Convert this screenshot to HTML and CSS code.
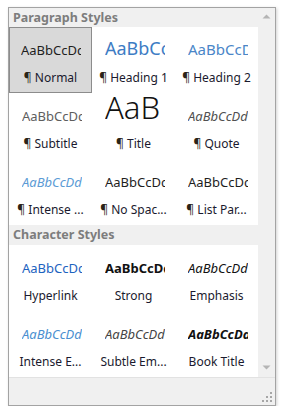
FILE: index.html
```html
<!DOCTYPE html>
<html lang="en">
<head>
  <meta charset="UTF-8" />
  <title>Styles Gallery</title>
  <link rel="stylesheet" href="styles.css">
</head>
<body>
  <div class="panel">
    <div class="list">
      <div class="group-title">Paragraph Styles</div>
      <div class="grid">
        <div class="cell selected">
          <div class="preview"><span class="p-normal">AaBbCcDd</span></div>
          <div class="label"><span class="pil">¶</span> Normal</div>
        </div>
        <div class="cell">
          <div class="preview"><span class="p-h1">AaBbCcDd</span></div>
          <div class="label"><span class="pil">¶</span> Heading 1</div>
        </div>
        <div class="cell">
          <div class="preview"><span class="p-h2">AaBbCcDd</span></div>
          <div class="label"><span class="pil">¶</span> Heading 2</div>
        </div>
        <div class="cell">
          <div class="preview"><span class="p-subtitle">AaBbCcDd</span></div>
          <div class="label"><span class="pil">¶</span> Subtitle</div>
        </div>
        <div class="cell">
          <div class="preview"><span class="p-title">AaB</span></div>
          <div class="label"><span class="pil">¶</span> Title</div>
        </div>
        <div class="cell">
          <div class="preview"><span class="p-quote">AaBbCcDd</span></div>
          <div class="label"><span class="pil">¶</span> Quote</div>
        </div>
        <div class="cell">
          <div class="preview"><span class="p-iquote">AaBbCcDd</span></div>
          <div class="label"><span class="pil">¶</span> Intense ...</div>
        </div>
        <div class="cell">
          <div class="preview"><span class="p-normal">AaBbCcDd</span></div>
          <div class="label"><span class="pil">¶</span> No Spac...</div>
        </div>
        <div class="cell">
          <div class="preview"><span class="p-normal">AaBbCcDd</span></div>
          <div class="label"><span class="pil">¶</span> List Par...</div>
        </div>
      </div>

      <div class="group-title second">Character Styles</div>
      <div class="grid">
        <div class="cell">
          <div class="preview"><span class="p-link">AaBbCcDd</span></div>
          <div class="label">Hyperlink</div>
        </div>
        <div class="cell">
          <div class="preview"><span class="p-strong">AaBbCcDd</span></div>
          <div class="label">Strong</div>
        </div>
        <div class="cell">
          <div class="preview"><span class="p-em">AaBbCcDd</span></div>
          <div class="label">Emphasis</div>
        </div>
        <div class="cell">
          <div class="preview"><span class="p-iem">AaBbCcDd</span></div>
          <div class="label">Intense E...</div>
        </div>
        <div class="cell">
          <div class="preview"><span class="p-sem">AaBbCcDd</span></div>
          <div class="label">Subtle Em...</div>
        </div>
        <div class="cell">
          <div class="preview"><span class="p-book">AaBbCcDd</span></div>
          <div class="label">Book Title</div>
        </div>
      </div>
    </div>

    <div class="scrollbar">
      <svg class="arrow" width="9" height="5" viewBox="0 0 9 5"><path d="M0.5 4.5 L4.5 0.5 L8.5 4.5 Z" fill="#b4b4b4"/></svg>
      <svg class="arrow" width="9" height="5" viewBox="0 0 9 5"><path d="M0.5 0.5 L4.5 4.5 L8.5 0.5 Z" fill="#b4b4b4"/></svg>
    </div>

    <div class="footer">
      <svg class="grip" width="10" height="10" viewBox="0 0 10 10" fill="#a6a6a6">
        <rect x="8" y="0" width="2" height="2"/>
        <rect x="4" y="4" width="2" height="2"/>
        <rect x="8" y="4" width="2" height="2"/>
        <rect x="0" y="8" width="2" height="2"/>
        <rect x="4" y="8" width="2" height="2"/>
        <rect x="8" y="8" width="2" height="2"/>
      </svg>
    </div>
  </div>
</body>
</html>
```

FILE: styles.css
```css
body {
  margin: 0;
  background: #ffffff;
  font-family: 'Noto Sans', 'Open Sans', sans-serif;
  color: #1e1e1e;
}

.panel {
  margin: 7px 0 0 8px;
  width: 266px;
  height: 397px;
  border: 1px solid #a3a3a3;
  background: #f0f0f0;
  box-shadow: 1px 1px 3px rgba(0,0,0,0.18);
  display: grid;
  grid-template-columns: 249px 17px;
  grid-template-rows: 369px 28px;
}

.list {
  display: flex;
  flex-direction: column;
}

.group-title {
  height: 19px;
  line-height: 19px;
  padding-left: 4px;
  font-size: 12.5px;
  font-weight: bold;
  color: #7d7d7d;
}

.group-title.second {
  height: 20px;
  line-height: 20px;
}

.grid {
  display: grid;
  grid-template-columns: repeat(3, 83px);
  grid-auto-rows: 66px;
  background: #ffffff;
}

.cell {
  display: flex;
  flex-direction: column;
  align-items: center;
  box-sizing: border-box;
}

.cell.selected {
  background: #d9d9d9;
  border: 1px solid #8c8c8c;
}

.preview {
  box-sizing: border-box;
  width: 83px;
  height: 30px;
  padding: 0 10px 0 13px;
  display: flex;
  align-items: flex-end;
  overflow: hidden;
  white-space: nowrap;
}

.preview span {
  line-height: 1;
  display: block;
  overflow: hidden;
  width: 60px;
}

.selected .preview {
  margin-top: -1px;
  padding-left: 12px;
}

.label {
  margin-top: 13px;
  font-size: 12px;
  line-height: 16px;
  color: #1a1a2e;
  white-space: nowrap;
}

.pil {
  color: #2a2418;
}

.p-normal { font-size: 13px; color: #1e1e1e; }
.p-h1 { font-size: 18px; color: #3d7cc4; }
.p-h2 { font-size: 15px; color: #4a86c8; }
.p-subtitle { font-size: 13px; color: #5e5e5e; }
.p-title { font-size: 31px; font-weight: 300; color: #111111; }
.p-quote { font-size: 13px; font-style: italic; color: #505050; }
.p-iquote { font-size: 13px; font-style: italic; color: #5b9bd5; }
.p-link { font-size: 13px; color: #1d63c0; }
.p-strong { font-size: 13px; font-weight: bold; color: #111111; }
.p-em { font-size: 13px; font-style: italic; color: #111111; }
.p-iem { font-size: 13px; font-style: italic; color: #4a8fd0; }
.p-sem { font-size: 13px; font-style: italic; color: #454545; }
.p-book { font-size: 13px; font-style: italic; font-weight: bold; color: #111111; }

.scrollbar {
  display: flex;
  flex-direction: column;
  justify-content: space-between;
  align-items: center;
  padding: 6px 0 7px;
}

.arrow {
  display: block;
}

.footer {
  grid-column: 1 / 3;
  border-top: 1px solid #e2e2e2;
  display: flex;
  justify-content: flex-end;
  align-items: flex-end;
  padding: 0 3px 3px 0;
}

.grip {
  display: block;
}
```
